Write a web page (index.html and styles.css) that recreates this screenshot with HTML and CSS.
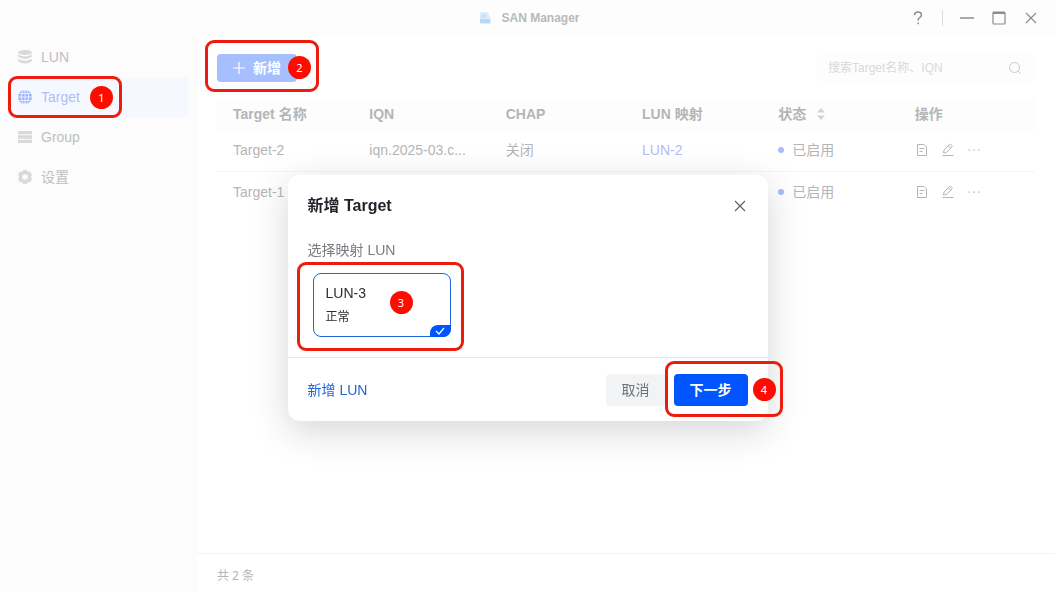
FILE: index.html
```html
<!DOCTYPE html>
<html lang="zh-CN">
<head>
    <meta charset="UTF-8">
    <meta name="viewport" content="width=device-width, initial-scale=1.0">
    <title>SAN Manager</title>
    <link rel="stylesheet" href="styles.css">
</head>
<body>
    <!-- shared icons -->
    <svg class="sprite" aria-hidden="true">
        <symbol id="icon-close" viewBox="0 0 12 12">
            <path d="M1 1l10 10M11 1L1 11" fill="none" stroke="currentColor" stroke-width="1.2"/>
        </symbol>
        <symbol id="icon-detail" viewBox="0 0 14 14">
            <path d="M2.500 1.500h6.500l2.500 2.500v8.500h-9zM4.500 5.500h5M4.500 8.500h3" fill="none" stroke="currentColor" stroke-linejoin="round"/>
        </symbol>
        <symbol id="icon-edit" viewBox="0 0 14 14">
            <path d="M2.500 10l.5-3L8.600 1.500q.6-.5 1.200 0l1.200 1.200q.5.600 0 1.200L5.500 9.500zM7.300 2.800l2.400 2.400M1.500 12.500h11" fill="none" stroke="currentColor" stroke-linejoin="round"/>
        </symbol>
        <symbol id="icon-more" viewBox="0 0 14 14">
            <path d="M1.500 6.500h1.400v1.200H1.500zM6.300 6.500h1.400v1.200H6.300zM11.100 6.500h1.400v1.200h-1.400z" fill="currentColor"/>
        </symbol>
    </svg>

    <div class="window">
        <header class="titlebar">
            <div class="app-name">
                <svg width="12" height="12" viewBox="0 0 12 12">
                    <path d="M1 1q0-1 1-1h6q1 0 1.300 1L12 7v4q0 1-1 1H2q-1 0-1-1z" fill="#dcedfb"/>
                    <path d="M1 7h10v4H1z" fill="#b9d8f4"/>
                    <path d="M2 2h5v4H2z" fill="#cbe3f9"/>
                </svg>
                <span>SAN Manager</span>
            </div>
            <div class="window-controls">
                <button type="button" aria-label="帮助">
                    <svg width="12" height="14" viewBox="0 0 12 14"><path d="M2.500 4q.2-3 3.500-3t3.500 2.800q0 1.500-1.700 2.700T6.100 9.500M6.100 11.500v1.700" fill="none" stroke="currentColor" stroke-width="1.500"/></svg>
                </button>
                <span class="divider"></span>
                <button type="button" aria-label="最小化">
                    <svg width="14" height="14" viewBox="0 0 14 14"><path d="M0 7h14" stroke="currentColor" stroke-width="1.500"/></svg>
                </button>
                <button type="button" aria-label="最大化">
                    <svg width="14" height="14" viewBox="0 0 14 14"><rect x="1" y="1" width="12" height="12" rx="1" fill="none" stroke="currentColor" stroke-width="1.200"/><path d="M1 2h12" stroke="currentColor" stroke-width="2"/></svg>
                </button>
                <button type="button" aria-label="关闭">
                    <svg width="12" height="12"><use href="#icon-close"/></svg>
                </button>
            </div>
        </header>

        <div class="layout">
            <nav class="sidebar">
                <a href="#lun">
                    <svg width="16" height="16" viewBox="0 0 16 16" fill="currentColor"><ellipse cx="8" cy="3.500" rx="6.800" ry="2.600"/><path d="M1.200 5.500Q8 9.500 14.800 5.500v2.300Q8 12 1.200 7.800zM1.200 9.800Q8 13.800 14.800 9.800v2.400Q8 17 1.200 12.200z"/></svg>
                    LUN
                </a>
                <a href="#target" class="active">
                    <svg width="16" height="16" viewBox="0 0 16 16"><circle cx="8" cy="8" r="7" fill="currentColor"/><path d="M8 1v14M1 8h14M2.500 4.500h11M2.500 11.500h11" stroke="#f5f9ff" stroke-width=".8"/><ellipse cx="8" cy="8" rx="3.600" ry="7" fill="none" stroke="#f5f9ff" stroke-width=".8"/></svg>
                    Target
                    <span class="callout callout-nav"><b>1</b></span>
                </a>
                <a href="#group">
                    <svg width="16" height="16" viewBox="0 0 16 16" fill="currentColor"><path d="M1 2h14v3.300H1zM1 6.300h14v3.400H1zM1 10.700h14V14H1z"/></svg>
                    Group
                </a>
                <a href="#settings">
                    <svg width="16" height="16" viewBox="0 0 16 16"><path d="M5 2.800L6.500 1h3L11 2.800l2.400.3L14.900 6l-.9 2 .9 2-1.500 2.900-2.400.3L9.500 15h-3L5 13.200l-2.400-.3L1.100 10 2 8l-.9-2 1.500-2.900zM8 5.200a2.800 2.800 0 1 0 0 5.600 2.800 2.800 0 1 0 0-5.600z" fill="currentColor" fill-rule="evenodd"/></svg>
                    设置
                </a>
            </nav>

            <main class="main">
                <div class="toolbar">
                    <button type="button" class="btn-add">
                        <svg width="12" height="12" viewBox="0 0 12 12"><path d="M6 0v12M0 6h12" stroke="currentColor" stroke-width="1.200"/></svg>
                        新增
                        <span class="callout callout-add"><b>2</b></span>
                    </button>
                    <label class="search">
                        <input type="text" placeholder="搜索Target名称、IQN" aria-label="搜索">
                        <svg width="14" height="14" viewBox="0 0 14 14"><path d="M11.500 6.500a5 5 0 1 1-10 0 5 5 0 1 1 10 0zM10.300 10.300l2.400 2.400" fill="none" stroke="currentColor"/></svg>
                    </label>
                </div>

                <table>
                    <thead>
                        <tr>
                            <th>Target 名称</th>
                            <th>IQN</th>
                            <th>CHAP</th>
                            <th>LUN 映射</th>
                            <th>
                                <div class="sortable">
                                    状态
                                    <svg width="10" height="14" viewBox="0 0 10 14" fill="#d2d3d4"><path d="M5 1l4 4.500H1zM5 13L1 8.500h8z"/></svg>
                                </div>
                            </th>
                            <th>操作</th>
                        </tr>
                    </thead>
                    <tbody>
                        <tr>
                            <td>Target-2</td>
                            <td>iqn.2025-03.c...</td>
                            <td>关闭</td>
                            <td><a href="#lun-2">LUN-2</a></td>
                            <td><span class="status">已启用</span></td>
                            <td>
                                <div class="actions">
                                    <button type="button" aria-label="详情"><svg width="14" height="14"><use href="#icon-detail"/></svg></button>
                                    <button type="button" aria-label="编辑"><svg width="14" height="14"><use href="#icon-edit"/></svg></button>
                                    <button type="button" aria-label="更多"><svg width="14" height="14"><use href="#icon-more"/></svg></button>
                                </div>
                            </td>
                        </tr>
                        <tr>
                            <td>Target-1</td>
                            <td></td>
                            <td></td>
                            <td></td>
                            <td><span class="status">已启用</span></td>
                            <td>
                                <div class="actions">
                                    <button type="button" aria-label="详情"><svg width="14" height="14"><use href="#icon-detail"/></svg></button>
                                    <button type="button" aria-label="编辑"><svg width="14" height="14"><use href="#icon-edit"/></svg></button>
                                    <button type="button" aria-label="更多"><svg width="14" height="14"><use href="#icon-more"/></svg></button>
                                </div>
                            </td>
                        </tr>
                    </tbody>
                </table>

                <footer class="summary">共 2 条</footer>
            </main>
        </div>
    </div>

    <div class="overlay">
        <form class="dialog" role="dialog" aria-labelledby="dialog-title">
            <div class="dialog-header">
                <h2 id="dialog-title">新增 Target</h2>
                <button type="button" class="dialog-close" aria-label="关闭">
                    <svg width="12" height="12"><use href="#icon-close"/></svg>
                </button>
            </div>
            <div class="dialog-body">
                <p>选择映射 LUN</p>
                <label class="lun-card">
                    <input type="checkbox" name="lun" value="LUN-3" checked>
                    <span class="lun-name">LUN-3</span>
                    <span class="lun-state">正常</span>
                    <span class="lun-check">
                        <svg width="10" height="8" viewBox="0 0 10 8"><path d="M1 4l3 3 5-6" fill="none" stroke="#fff" stroke-width="1.200"/></svg>
                    </span>
                    <span class="callout callout-lun"><b>3</b></span>
                </label>
            </div>
            <div class="dialog-footer">
                <a href="#new-lun">新增 LUN</a>
                <button type="button" class="btn-cancel">取消</button>
                <button type="button" class="btn-next">
                    下一步
                    <span class="callout callout-next"><b>4</b></span>
                </button>
            </div>
        </form>
    </div>
</body>
</html>
```
FILE: styles.css
```css
* {
    box-sizing: border-box;
}

body {
    margin: 0;
    font-family: "Liberation Sans", "Noto Sans CJK SC", sans-serif;
    font-size: 14px;
    line-height: 20px;
    color: #b4b5b6;
    background-color: #fff;
}

button {
    padding: 0;
    border: none;
    background: none;
    font: inherit;
    color: inherit;
    cursor: pointer;
}

a {
    color: #b1bbfa;
    text-decoration: none;
}

svg {
    display: block;
    flex: none;
}

.sprite {
    position: absolute;
    width: 0;
    height: 0;
}

.window {
    display: flex;
    flex-direction: column;
    min-height: 100vh;
}

/* TITLE BAR */
.titlebar {
    display: grid;
    grid-template-columns: 1fr auto 1fr;
    align-items: center;
    height: 36px;
    padding-right: 8px;
    padding-left: 12px;
    background-color: #fdfdfd;
}

.app-name {
    display: flex;
    grid-column: 2;
    align-items: center;
    gap: 10px;
    font-size: 12px;
    font-weight: bold;
    color: #b8b9ba;
}

.window-controls {
    display: flex;
    align-items: center;
    justify-content: flex-end;
    color: #8b8c8d;
}

.window-controls button {
    display: flex;
    align-items: center;
    justify-content: center;
    width: 32px;
    height: 36px;
}

.window-controls .divider {
    width: 1px;
    height: 16px;
    margin: 0 8px;
    background-color: #dcdcdc;
}

/* SIDEBAR */
.layout {
    display: flex;
    flex: 1;
}

.sidebar {
    flex: none;
    width: 197px;
    padding: 1px 9px 0 8px;
    background-color: #fcfcfc;
}

.sidebar a {
    position: relative;
    display: flex;
    align-items: center;
    gap: 8px;
    height: 40px;
    padding-left: 9px;
    border-radius: 4px;
    color: #bebfc0;
}

.sidebar svg {
    color: #d8d9da;
}

.sidebar a.active {
    background-color: #f5f9ff;
    color: #adbdfb;
}

.sidebar .active svg {
    color: #9db5fb;
}

/* MAIN */
.main {
    display: flex;
    flex: 1;
    flex-direction: column;
    min-width: 0;
}

.toolbar {
    display: flex;
    justify-content: space-between;
    padding: 18px 20px 16px;
}

.btn-add {
    position: relative;
    display: flex;
    align-items: center;
    gap: 8px;
    height: 28px;
    padding: 0 16px;
    border-radius: 4px;
    background-color: #a6c0ff;
    color: #fff;
    font-weight: bold;
}

.search {
    display: flex;
    align-items: center;
    width: 218px;
    height: 28px;
    padding: 0 13px 0 11px;
    border-radius: 4px;
    background-color: #fdfdfd;
    color: #c8c9ca;
}

.search input {
    flex: 1;
    min-width: 0;
    padding: 0;
    border: none;
    outline: none;
    background: none;
    font: inherit;
    font-size: 12px;
}

.search input::placeholder {
    color: #d8d9da;
}

table {
    width: calc(100% - 40px);
    margin: 0 20px;
    border-collapse: collapse;
    table-layout: fixed;
}

th,
td {
    padding: 0 16px;
    overflow: hidden;
    text-align: left;
    text-overflow: ellipsis;
    white-space: nowrap;
}

th {
    height: 32px;
    background-color: #fdfdfd;
}

td {
    height: 41px;
    border-bottom: 1px solid #f5f5f5;
}

tbody tr:last-child td {
    border-bottom: none;
}

.sortable {
    display: flex;
    align-items: center;
    gap: 10px;
}

.status {
    display: flex;
    align-items: center;
    gap: 8px;
}

.status::before {
    content: "";
    width: 6px;
    height: 6px;
    border-radius: 50%;
    background-color: #a9bdfb;
}

.actions {
    display: flex;
    gap: 12px;
}

.summary {
    margin-top: auto;
    padding: 12px 20px 6px;
    border-top: 1px solid #f3f3f3;
    font-size: 12px;
    font-family: "Noto Sans", "Noto Sans CJK SC", sans-serif;
}

/* DIALOG */
.overlay {
    position: fixed;
    inset: 0;
    display: flex;
    align-items: center;
    justify-content: center;
    padding-top: 4px;
}

.dialog {
    width: 480px;
    border-radius: 12px;
    background-color: #fff;
    box-shadow: 0 10px 36px rgba(20, 30, 45, 0.18);
}

.dialog-header {
    display: flex;
    align-items: center;
    justify-content: space-between;
    height: 62px;
    padding: 0 20px;
    color: #1f2329;
}

.dialog-header h2 {
    margin: 0;
    font-size: 16px;
}

.dialog-close {
    padding: 2px;
    color: #5f6165;
}

.dialog-body {
    padding: 3px 20px 20px;
    border-bottom: 1px solid #e6e7e8;
    color: #797c80;
}

.dialog-body p {
    margin: 0 0 13px;
}

.lun-card {
    position: relative;
    display: flex;
    flex-direction: column;
    gap: 4px;
    width: 138px;
    height: 64px;
    margin-left: 5px;
    padding: 9px 12px;
    border: 1px solid #1f66d8;
    border-radius: 8px;
    color: #2b2e33;
    cursor: pointer;
}

.lun-card input {
    position: absolute;
    margin: 0;
    opacity: 0;
}

.lun-state {
    font-size: 12px;
}

.lun-check {
    position: absolute;
    right: -1px;
    bottom: -1px;
    display: flex;
    align-items: center;
    justify-content: center;
    width: 21px;
    height: 12px;
    border-radius: 8px 0;
    background-color: #0055ff;
}

.dialog-footer {
    display: flex;
    align-items: center;
    gap: 8px;
    padding: 16px 20px 15px;
}

.dialog-footer a {
    margin-right: auto;
    color: #1d63dd;
}

.dialog-footer button {
    height: 32px;
    padding: 0 16px;
    border-radius: 4px;
}

.btn-cancel {
    background-color: #f2f3f5;
    color: #707276;
}

.dialog-footer .btn-next {
    position: relative;
    background-color: #0055ff;
    color: #fff;
    font-weight: bold;
}

/* STEP CALLOUTS */
.callout {
    position: absolute;
    display: flex;
    align-items: center;
    border: 3px solid #ec1c0e;
    border-radius: 9px;
    pointer-events: none;
}

.callout b {
    width: 23px;
    height: 23px;
    margin-left: auto;
    border-radius: 50%;
    background-color: #ff0c00;
    color: #fff;
    font: 11px/23px "Noto Sans", sans-serif;
    text-align: center;
}

.callout-nav {
    top: -1px;
    left: 0;
    width: 114px;
    height: 42px;
    padding-right: 6px;
}

.callout-add {
    top: -14px;
    left: -12px;
    width: 114px;
    height: 52px;
    padding: 3px 5px 0 0;
}

.callout-lun {
    top: -12px;
    left: -17px;
    width: 167px;
    height: 89px;
    padding: 0 48px 8px 0;
}

.callout-next {
    top: -13px;
    left: -9px;
    width: 118px;
    height: 56px;
    padding: 1px 4px 0 0;
}
```
